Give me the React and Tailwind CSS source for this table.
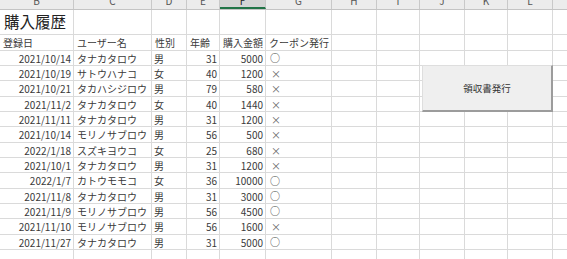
import React from "react";

const cols = [74, 78, 35, 33, 46, 66, 45, 43, 45, 43, 45, 20];
const letters = ["B", "C", "D", "E", "F", "G", "H", "I", "J", "K", "L", ""];

const data = [
  ["2021/10/14", "タナカタロウ", "男", "31", "5000", "○"],
  ["2021/10/19", "サトウハナコ", "女", "40", "1200", "×"],
  ["2021/10/21", "タカハシジロウ", "男", "79", "580", "×"],
  ["2021/11/2", "タナカタロウ", "女", "40", "1440", "×"],
  ["2021/11/11", "タナカタロウ", "男", "31", "1200", "×"],
  ["2021/10/14", "モリノサブロウ", "男", "56", "500", "×"],
  ["2022/1/18", "スズキヨウコ", "女", "25", "680", "×"],
  ["2021/10/1", "タナカタロウ", "男", "31", "1200", "×"],
  ["2022/1/7", "カトウモモコ", "女", "36", "10000", "○"],
  ["2021/11/8", "タナカタロウ", "男", "31", "3000", "○"],
  ["2021/11/9", "モリノサブロウ", "男", "56", "4500", "○"],
  ["2021/11/10", "モリノサブロウ", "男", "56", "1600", "×"],
  ["2021/11/27", "タナカタロウ", "男", "31", "5000", "○"],
];
const heights = [15, 15, 16, 15, 15, 16, 15, 15, 16, 15, 15, 16, 15];
const align = ["r", "l", "l", "r", "r", "l"];

function Cell({ w, children, a }) {
  return (
    <div
      style={{ width: w }}
      className={
        "shrink-0 h-full border-r border-b border-[#dadada] flex items-center overflow-visible whitespace-nowrap " +
        (a === "r" ? "justify-end pr-[2px]" : "justify-start pl-[2px]")
      }
    >
      {children}
    </div>
  );
}

export default function App() {
  return (
    <div
      className="relative w-[567px] h-[259px] overflow-hidden bg-white text-[#3a3a3a] text-[10px]"
      style={{ fontFamily: '"Noto Sans CJK JP", "Noto Sans", sans-serif' }}
    >
      {/* column header */}
      <div className="flex h-[10px] overflow-hidden bg-[#ececec] border-b border-[#c4c4c4]">
        {cols.map((w, i) => (
          <div
            key={i}
            style={{ width: w }}
            className={
              "shrink-0 h-full border-r border-[#c9c9c9] flex justify-center " +
              (letters[i] === "F" ? "bg-[#d4d4d4] border-b-2 border-b-[#217346] text-[#222]" : "text-[#555]")
            }
          >
            <div className="h-[18px] leading-[18px] -mt-[8px] text-[10px]">{letters[i]}</div>
          </div>
        ))}
      </div>
      {/* title row */}
      <div className="flex h-[25px]">
        {cols.map((w, i) => (
          <Cell key={i} w={w} a="l">
            {i === 0 ? <span className="text-[15.5px] text-[#222] pl-[2px] leading-none">購入履歴</span> : null}
          </Cell>
        ))}
      </div>
      {/* header row */}
      <div className="flex h-[16px]">
        {cols.map((w, i) => {
          const t = ["登録日", "ユーザー名", "性別", "年齢", "購入金額", "クーポン発行"][i];
          return (
            <Cell key={i} w={w} a="l">
              {t ? <span className="pl-[1px]">{t}</span> : null}
            </Cell>
          );
        })}
      </div>
      {data.map((r, ri) => (
        <div key={ri} className="flex" style={{ height: heights[ri] }}>
          {cols.map((w, i) => (
            <Cell key={i} w={w} a={i < 6 ? align[i] : "l"}>
              {i < 6 ? (
                <span
                  className={
                    i === 5
                      ? r[5] === "×"
                        ? "pl-[3px] text-[10px] text-[#666]"
                        : "pl-[2px] text-[10px] leading-none"
                      : i === 1
                      ? "pl-[1px]"
                      : ""
                  }
                >
                  {r[i]}
                </span>
              ) : null}
            </Cell>
          ))}
        </div>
      ))}
      <div className="flex h-[12px]">
        {cols.map((w, i) => (
          <Cell key={i} w={w} a="l" />
        ))}
      </div>
      {/* button */}
      <div className="absolute left-[422px] top-[65px] w-[131px] h-[47px] bg-[#efefef] border-l border-t border-[#dedede] border-r-2 border-b-2 border-r-[#9c9c9c] border-b-[#9c9c9c] flex items-center justify-center text-[9.5px] text-[#333]">
        領収書発行
      </div>
    </div>
  );
}
